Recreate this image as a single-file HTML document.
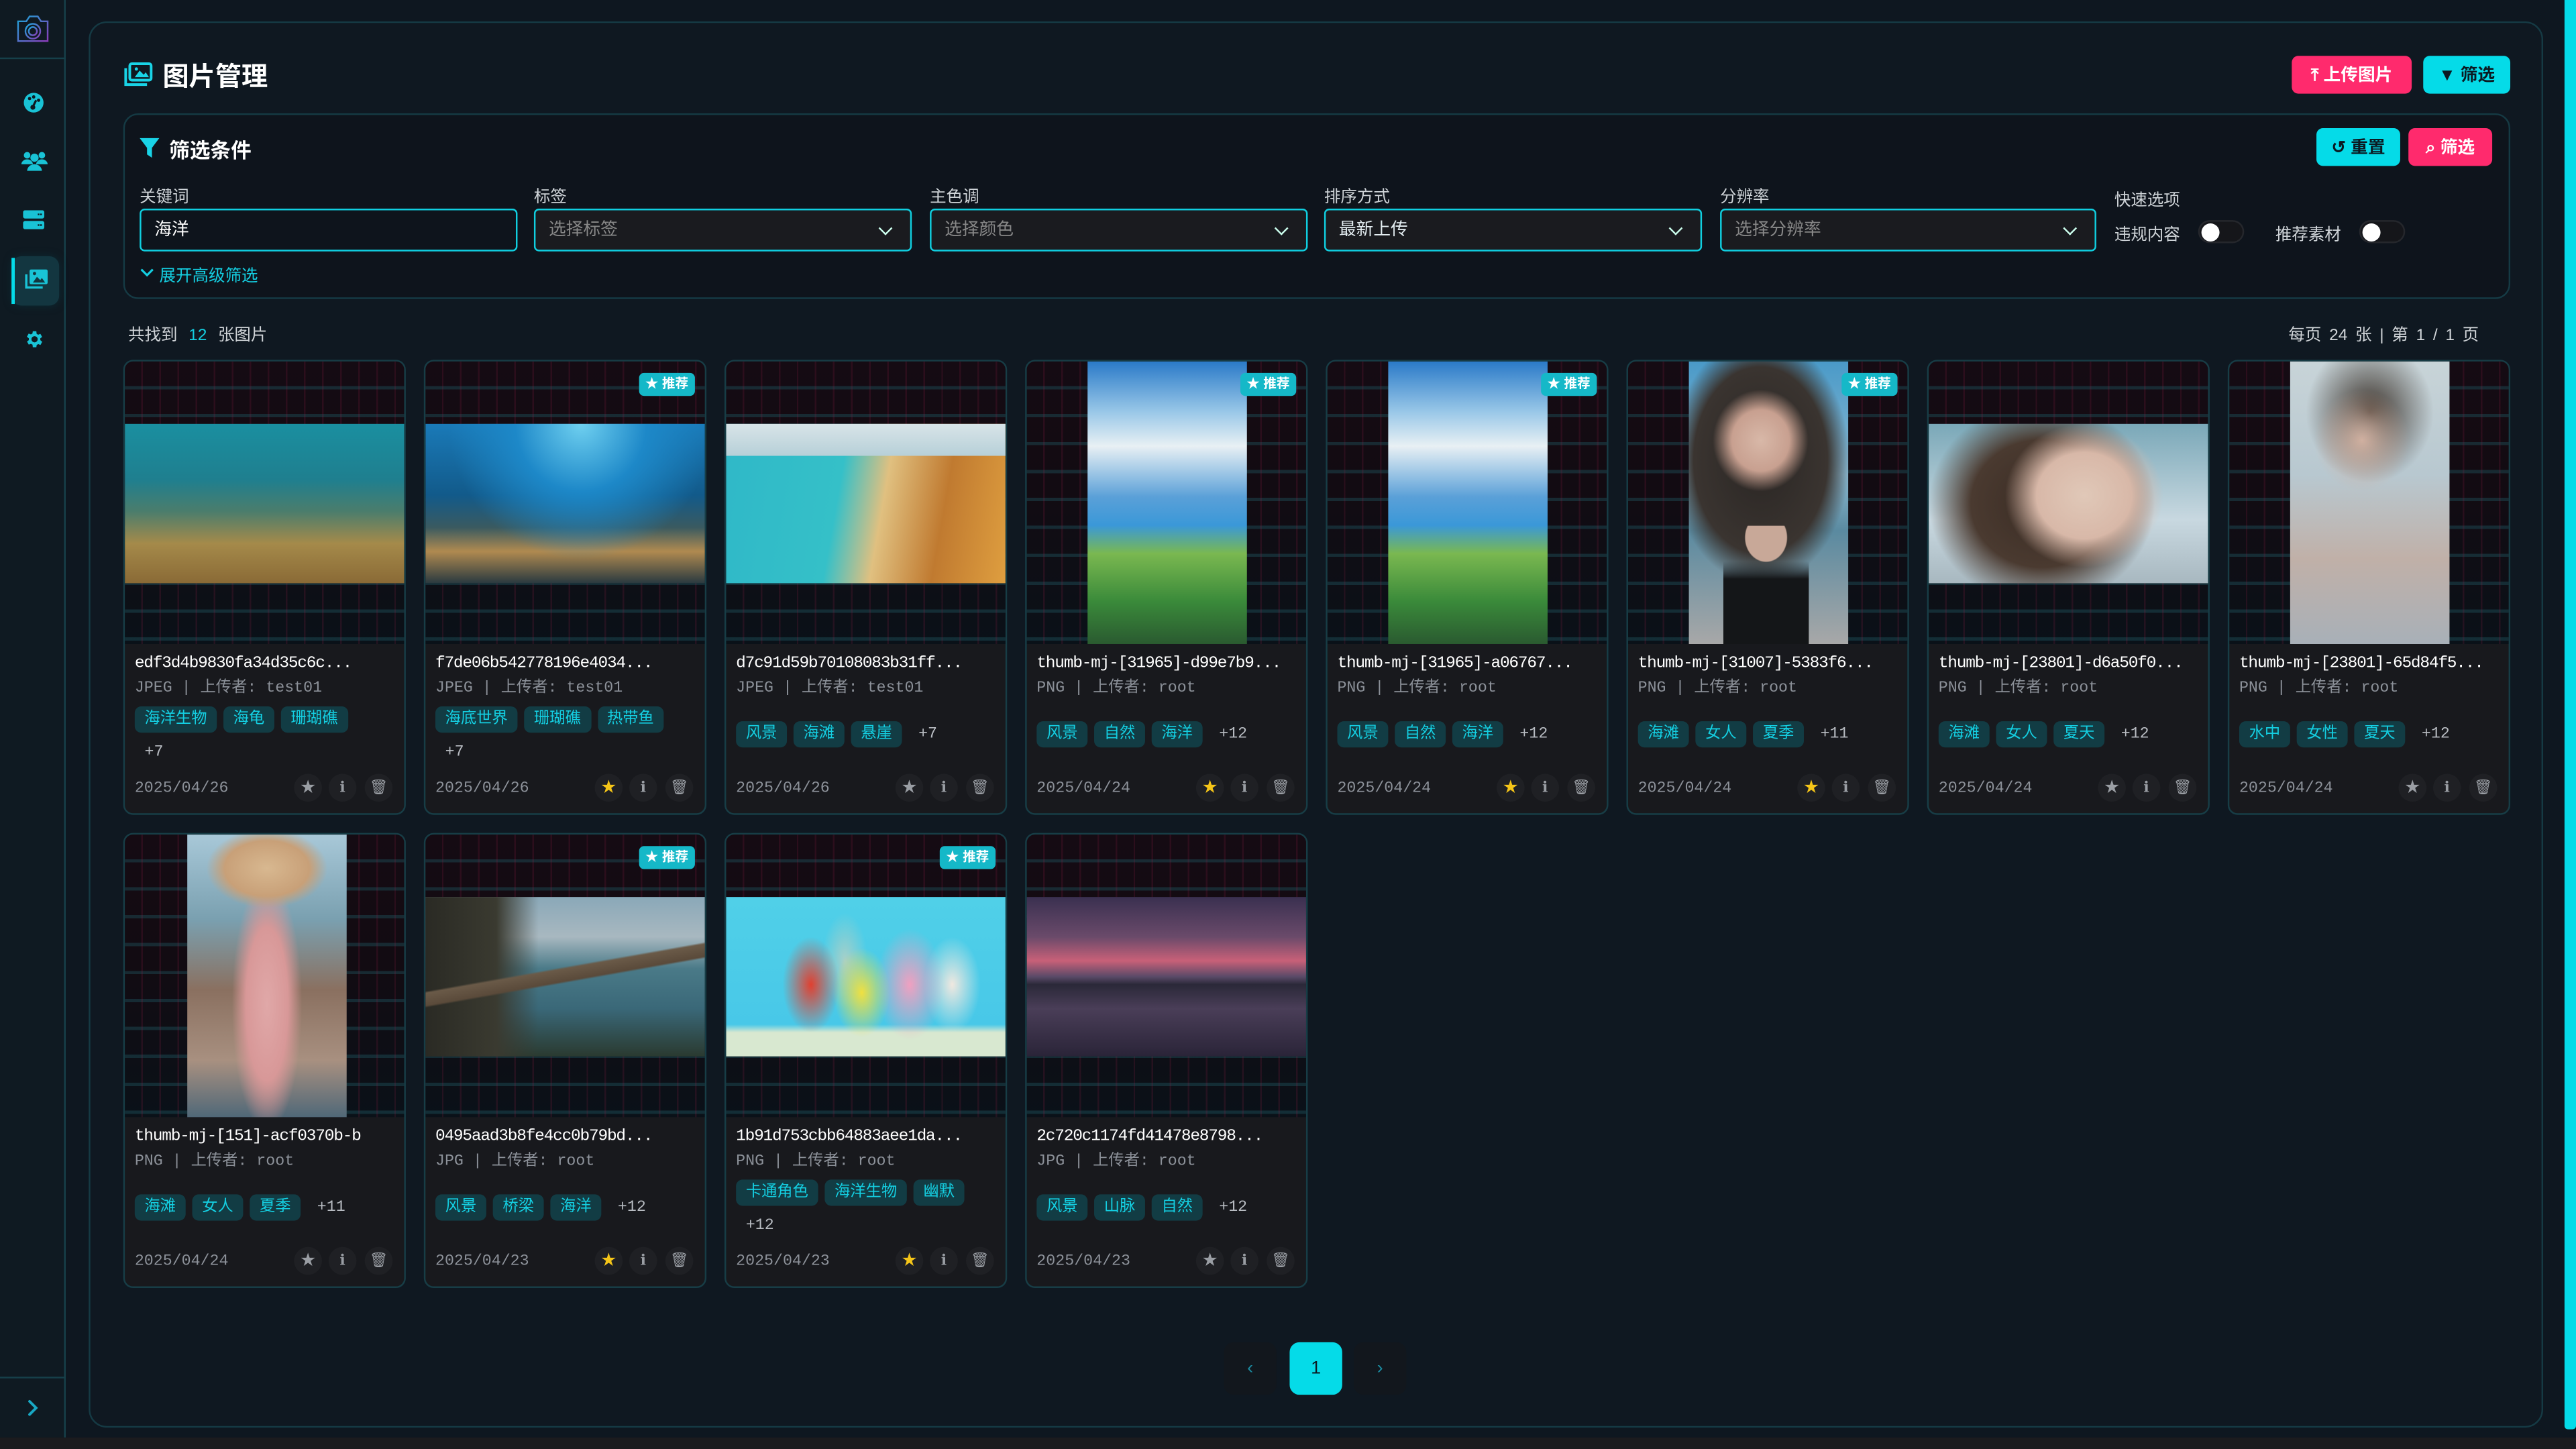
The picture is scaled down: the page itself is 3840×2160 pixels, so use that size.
<!DOCTYPE html>
<html><head><meta charset="utf-8">
<style>
*{margin:0;padding:0;box-sizing:border-box}
html,body{width:3840px;height:2160px;overflow:hidden;background:#1b1b1e}
#w{position:absolute;left:0;top:0;width:1568px;height:882px;transform:scale(2.44898);transform-origin:0 0;background:#0e1720;font-family:"Liberation Sans","Noto Sans CJK SC",sans-serif;color:#e8ecef;overflow:hidden}
.abs{position:absolute}
#side{left:0;top:0;width:40px;height:875px;background:#0f1a22;border-right:1px solid #16404a}
#bot{left:0;top:875px;width:1568px;height:7px;background:#1b1b1e}
#scroll{left:1561px;top:0;width:7px;height:870px;background:#05dbe8;border-radius:0 0 2px 2px}
#panel{left:54px;top:13px;width:1494px;height:856px;border:1px solid #153a44;border-radius:11px;background:#0f1821}
.btn{position:absolute;height:23px;border-radius:4px;font-size:10.5px;font-weight:bold;color:#111;display:flex;align-items:center;justify-content:center;gap:4px}
.pink{background:#ff2a6d;color:#fff}
.cyan{background:#05dbe8;color:#0b1a22}
#filter{left:75px;top:69px;width:1453px;height:113px;border:1px solid #153a44;border-radius:9px;background:#0e141c}
.lbl{position:absolute;font-size:10px;color:#cfd4d8}
.inp{position:absolute;top:127px;height:26px;width:230px;border:1px solid #10cfe0;border-radius:3px;background:#1a1b1f;font-size:10.5px;color:#888;padding-left:8px;line-height:24px}
.inp .chev{position:absolute;right:12px;top:8px;width:6px;height:6px;border-right:1.3px solid #cfe;border-bottom:1.3px solid #cfe;transform:rotate(45deg)}
.tog{position:absolute;top:134px;width:28px;height:14px;border-radius:7px;background:#15161a;border:1px solid #25272c}
.tog:after{content:"";position:absolute;left:1px;top:1px;width:11px;height:11px;border-radius:50%;background:#fff}
.card{position:absolute;width:172px;height:277px;border:1px solid #173d46;border-radius:6px;background:#18191d;overflow:hidden}
.ia{position:absolute;left:0;top:0;width:172px;height:172px;
background:
repeating-linear-gradient(90deg,transparent 0 10px,rgba(150,30,70,.18) 10px 11px),
repeating-linear-gradient(180deg,transparent 0 15px,rgba(30,80,90,.45) 15px 17px),
linear-gradient(#150b13 0,#120b12 45%,#0a1118 100%)}
.im{position:absolute}
.land{left:0;top:38px;width:172px;height:97px}
.por{left:37px;top:0;width:97px;height:172px}
.badge{position:absolute;right:6px;top:7px;height:14px;padding:0 4px;background:#15b8c8;border-radius:3px;font-size:8px;font-weight:bold;color:#fff;line-height:14px}
.ti{position:absolute;left:6px;top:179px;font-family:"Liberation Mono",monospace;font-size:10px;color:#fff;white-space:nowrap;letter-spacing:-.5px}
.me{position:absolute;left:6px;top:190px;font-family:"Liberation Mono","Noto Sans CJK SC",monospace;font-size:9.5px;color:#8c9199;white-space:nowrap}
.tg{position:absolute;left:6px;top:205px;width:150px;height:44px;display:flex;flex-wrap:wrap;align-content:center;row-gap:4px}
.tg span{font-size:9.5px;background:#123c44;color:#14cfe2;border-radius:4px;padding:2px 6px;margin-right:4px;height:16px;line-height:12px}
.tg i{font-style:normal;font-size:9.5px;color:#b8bcc2;padding:2px 6px;font-family:"Liberation Mono",monospace}
.dt{position:absolute;left:6px;top:254px;font-family:"Liberation Mono",monospace;font-size:9.5px;color:#8c9199}
.ic{position:absolute;top:251px;width:17px;height:17px;border-radius:50%;background:#1f2024;font-size:9px;text-align:center;line-height:17px;color:#9a9ea4}
.pg{position:absolute;top:817px;width:32px;height:32px;border-radius:6px;text-align:center;line-height:32px;font-size:11px}
</style></head><body>
<div id="w">
<div id="side" class="abs">
 <svg class="abs" style="left:9px;top:9px" width="22" height="17" viewBox="0 0 22 17"><defs><linearGradient id="cg" x1="0" y1="0" x2="1" y2="1"><stop offset="0" stop-color="#1aa6d8"/><stop offset="1" stop-color="#8a3bb8"/></linearGradient></defs><path d="M2 4h5l2-3h5l2 3h4v12H2z" fill="none" stroke="url(#cg)" stroke-width="1"/><circle cx="11" cy="10" r="4.5" fill="none" stroke="url(#cg)"/><circle cx="11" cy="10" r="2.5" fill="none" stroke="url(#cg)"/></svg>
 <div class="abs" style="left:0;top:35px;width:40px;height:1px;background:#16404a"></div>
 <svg class="abs" style="left:14px;top:56px" width="13" height="13" viewBox="0 0 13 13"><circle cx="6.5" cy="6.5" r="6" fill="#19c3d6"/><circle cx="4" cy="4" r="1" fill="#0f1a22"/><circle cx="6.5" cy="3" r="1" fill="#0f1a22"/><circle cx="9.5" cy="5" r="1" fill="#0f1a22"/><path d="M8 5L6 9" stroke="#0f1a22" stroke-width="1.3"/><circle cx="6" cy="9.3" r="1.5" fill="#0f1a22"/></svg>
 <svg class="abs" style="left:13px;top:92px" width="16" height="12" viewBox="0 0 16 12"><circle cx="3.5" cy="2.5" r="2" fill="#19c3d6"/><circle cx="12.5" cy="2.5" r="2" fill="#19c3d6"/><circle cx="8" cy="4" r="2.5" fill="#19c3d6"/><path d="M0 8a3.5 3 0 0 1 7 0zM9 8a3.5 3 0 0 1 7 0zM3.5 12a4.5 4 0 0 1 9 0z" fill="#19c3d6"/></svg>
 <svg class="abs" style="left:14px;top:128px" width="13" height="12" viewBox="0 0 13 12"><rect x="0" y="0" width="13" height="5" rx="1.3" fill="#19c3d6"/><rect x="0" y="6.5" width="13" height="5" rx="1.3" fill="#19c3d6"/><rect x="9" y="2" width="1" height="1" fill="#0f1a22"/><rect x="10.5" y="2" width="1" height="1" fill="#0f1a22"/><rect x="9" y="8.5" width="1" height="1" fill="#0f1a22"/><rect x="10.5" y="8.5" width="1" height="1" fill="#0f1a22"/></svg>
 <div class="abs" style="left:7px;top:156px;width:29px;height:30px;border-radius:6px;background:#133640;box-shadow:0 0 5px #0c2a33"></div>
 <div class="abs" style="left:7px;top:157px;width:2px;height:28px;background:#05dbe8"></div>
 <svg class="abs" style="left:15px;top:164px" width="14" height="13" viewBox="0 0 14 13"><rect x="3" y="0" width="11" height="9" rx="1" fill="#19c3d6"/><path d="M5 8l2.5-3.5 2 2 1-1.3 2 2.8z" fill="#133640"/><circle cx="6" cy="2.5" r="1" fill="#133640"/><path d="M1 3v8h10" fill="none" stroke="#19c3d6" stroke-width="1.4"/></svg>
 <svg class="abs" style="left:14px;top:200px" width="13" height="13" viewBox="0 0 24 24"><path fill="#19c3d6" d="M19.4 13a7.5 7.5 0 0 0 0-2l2.1-1.6-2-3.5-2.5 1a7 7 0 0 0-1.7-1L15 3h-4l-.4 2.6a7 7 0 0 0-1.7 1l-2.5-1-2 3.5L6.6 11a7.5 7.5 0 0 0 0 2l-2.1 1.6 2 3.5 2.5-1a7 7 0 0 0 1.7 1L11 21h4l.4-2.6a7 7 0 0 0 1.7-1l2.5 1 2-3.5zM13 15.5a3.5 3.5 0 1 1 0-7 3.5 3.5 0 0 1 0 7z"/></svg>
 <div class="abs" style="left:0;top:838px;width:40px;height:1px;background:#16404a"></div>
 <svg class="abs" style="left:16px;top:852px" width="8" height="10" viewBox="0 0 8 10"><path d="M2 1l4 4-4 4" fill="none" stroke="#18a8c4" stroke-width="1.6" stroke-linecap="round"/></svg>
</div>
<div id="bot" class="abs"></div>
<div id="scroll" class="abs"></div>
<div id="panel" class="abs"></div>

<svg class="abs" style="left:75px;top:38px" width="18" height="15" viewBox="0 0 18 15"><rect x="4" y="0.8" width="13" height="10" rx="1.2" fill="none" stroke="#19d3e6" stroke-width="1.6"/><path d="M7 9l3-4 2.5 2.5 1.2-1.5 2 3z" fill="#19d3e6"/><circle cx="8" cy="4" r="1" fill="#19d3e6"/><path d="M1.5 3.5v10h13" fill="none" stroke="#19d3e6" stroke-width="1.6"/></svg>
<div class="abs" style="left:99px;top:33px;font-size:16px;font-weight:bold;color:#fff">图片管理</div>
<div class="btn pink" style="left:1395px;top:34px;width:73px">⤒ 上传图片</div>
<div class="btn cyan" style="left:1475px;top:34px;width:53px">▼ 筛选</div>

<div id="filter" class="abs"></div>
<svg class="abs" style="left:85px;top:84px" width="12" height="12" viewBox="0 0 12 12"><path d="M0 0h12L7.5 6v6L4.5 10V6z" fill="#19d3e6"/></svg>
<div class="abs" style="left:103px;top:81px;font-size:12.5px;font-weight:bold;color:#fff">筛选条件</div>
<div class="btn cyan" style="left:1410px;top:78px;width:51px">↺ 重置</div>
<div class="btn pink" style="left:1466px;top:78px;width:51px">⌕ 筛选</div>

<div class="lbl" style="left:85px;top:111px">关键词</div>
<div class="lbl" style="left:325px;top:111px">标签</div>
<div class="lbl" style="left:566px;top:111px">主色调</div>
<div class="lbl" style="left:806px;top:111px">排序方式</div>
<div class="lbl" style="left:1047px;top:111px">分辨率</div>
<div class="lbl" style="left:1287px;top:113px">快速选项</div>
<div class="inp" style="left:85px;background:#0e141c;color:#fff">海洋</div>
<div class="inp" style="left:325px">选择标签<div class="chev"></div></div>
<div class="inp" style="left:566px">选择颜色<div class="chev"></div></div>
<div class="inp" style="left:806px;color:#e4eef2">最新上传<div class="chev"></div></div>
<div class="inp" style="left:1047px;width:229px">选择分辨率<div class="chev"></div></div>
<div class="lbl" style="left:1287px;top:134px">违规内容</div>
<div class="tog" style="left:1338px"></div>
<div class="lbl" style="left:1385px;top:134px">推荐素材</div>
<div class="tog" style="left:1436px"></div>
<svg class="abs" style="left:85px;top:163px" width="9" height="6" viewBox="0 0 9 6"><path d="M1 1l3.5 3.5L8 1" fill="none" stroke="#14cfe2" stroke-width="1.3"/></svg>
<div class="abs" style="left:97px;top:159px;font-size:10px;color:#14cfe2">展开高级筛选</div>

<div class="abs" style="left:78px;top:195px;font-size:10px;color:#d0d4d8">共找到 <span style="color:#14cfe2;margin:0 4px">12</span> 张图片</div>
<div class="abs" style="left:1393px;top:195px;font-size:10px;color:#d0d4d8;word-spacing:2px">每页 24 张 | 第 1 / 1 页</div>

<!-- row 1 -->
<div class="card" style="left:75px;top:219px"><div class="ia"></div>
 <div class="im land" style="background:linear-gradient(180deg,#1a8fa0 0%,#1f7f8f 35%,#4b7d6c 55%,#a58a4a 75%,#8a6a36 100%)"></div>
 <div class="ti">edf3d4b9830fa34d35c6c...</div><div class="me">JPEG | 上传者: test01</div>
 <div class="tg"><span>海洋生物</span><span>海龟</span><span>珊瑚礁</span><i>+7</i></div>
 <div class="dt">2025/04/26</div><div class="ic" style="left:103px">★</div><div class="ic" style="left:124px">ℹ</div><div class="ic" style="left:146px">🗑</div></div>

<div class="card" style="left:258px;top:219px"><div class="ia"></div>
 <div class="im land" style="background:radial-gradient(ellipse at 55% 0%,#6fd0f0 0,#1d88c8 30%,transparent 60%),linear-gradient(180deg,#1a7ab8 0%,#125a8a 45%,#3a5a60 65%,#b08a50 80%,#2a3a40 100%)"></div>
 <div class="badge">★ 推荐</div>
 <div class="ti">f7de06b542778196e4034...</div><div class="me">JPEG | 上传者: test01</div>
 <div class="tg"><span>海底世界</span><span>珊瑚礁</span><span>热带鱼</span><i>+7</i></div>
 <div class="dt">2025/04/26</div><div class="ic" style="left:103px;color:#f5c518">★</div><div class="ic" style="left:124px">ℹ</div><div class="ic" style="left:146px">🗑</div></div>

<div class="card" style="left:441px;top:219px"><div class="ia"></div>
 <div class="im land" style="background:linear-gradient(180deg,#d8e4e8 0%,#b7d0d8 20%,transparent 20%),linear-gradient(100deg,#2fb8c8 0%,#35c0c8 40%,#e0c080 55%,#c07a30 75%,#e0a040 100%)"></div>
 <div class="ti">d7c91d59b70108083b31ff...</div><div class="me">JPEG | 上传者: test01</div>
 <div class="tg"><span>风景</span><span>海滩</span><span>悬崖</span><i>+7</i></div>
 <div class="dt">2025/04/26</div><div class="ic" style="left:103px">★</div><div class="ic" style="left:124px">ℹ</div><div class="ic" style="left:146px">🗑</div></div>

<div class="card" style="left:624px;top:219px"><div class="ia"></div>
 <div class="im por" style="background:linear-gradient(180deg,#2a7ac8 0%,#9ac8e8 18%,#e8f0f4 30%,#5aa0d8 48%,#3a98d8 58%,#7ab850 68%,#3a8a3a 85%,#2a5a30 100%)"></div>
 <div class="badge">★ 推荐</div>
 <div class="ti">thumb-mj-[31965]-d99e7b9...</div><div class="me">PNG | 上传者: root</div>
 <div class="tg"><span>风景</span><span>自然</span><span>海洋</span><i>+12</i></div>
 <div class="dt">2025/04/24</div><div class="ic" style="left:103px;color:#f5c518">★</div><div class="ic" style="left:124px">ℹ</div><div class="ic" style="left:146px">🗑</div></div>

<div class="card" style="left:807px;top:219px"><div class="ia"></div>
 <div class="im por" style="background:linear-gradient(180deg,#2a7ac8 0%,#9ac8e8 18%,#e8f0f4 30%,#5aa0d8 48%,#3a98d8 58%,#7ab850 68%,#3a8a3a 85%,#2a5a30 100%)"></div>
 <div class="badge">★ 推荐</div>
 <div class="ti">thumb-mj-[31965]-a06767...</div><div class="me">PNG | 上传者: root</div>
 <div class="tg"><span>风景</span><span>自然</span><span>海洋</span><i>+12</i></div>
 <div class="dt">2025/04/24</div><div class="ic" style="left:103px;color:#f5c518">★</div><div class="ic" style="left:124px">ℹ</div><div class="ic" style="left:146px">🗑</div></div>

<div class="card" style="left:990px;top:219px"><div class="ia"></div>
 <div class="im por" style="background:radial-gradient(ellipse 30% 18% at 45% 28%,#d8b8a8 0,#c8a090 60%,transparent 100%),radial-gradient(ellipse 70% 55% at 45% 35%,#2a2624 0,#3a3430 60%,transparent 80%),linear-gradient(180deg,#4a9ac8 0%,#8ab8d0 40%,#5a8aa0 60%,#a8a8a8 100%)"></div>
 <div class="im" style="left:58px;top:100px;width:52px;height:72px;background:radial-gradient(ellipse 60% 50% at 50% 10%,#c8a898 0,#c8a898 40%,transparent 42%),linear-gradient(180deg,transparent 30%,#141618 45%)"></div>
 <div class="badge">★ 推荐</div>
 <div class="ti">thumb-mj-[31007]-5383f6...</div><div class="me">PNG | 上传者: root</div>
 <div class="tg"><span>海滩</span><span>女人</span><span>夏季</span><i>+11</i></div>
 <div class="dt">2025/04/24</div><div class="ic" style="left:103px;color:#f5c518">★</div><div class="ic" style="left:124px">ℹ</div><div class="ic" style="left:146px">🗑</div></div>

<div class="card" style="left:1173px;top:219px"><div class="ia"></div>
 <div class="im land" style="background:radial-gradient(ellipse 28% 45% at 55% 45%,#e0c8b8 0,#d8b8a8 60%,transparent 100%),radial-gradient(ellipse 50% 80% at 40% 50%,#3a2c24 0,#4a3a30 50%,transparent 80%),linear-gradient(180deg,#7aa8b8 0%,#c8d8e0 60%,#a8b8c0 100%)"></div>
 <div class="ti">thumb-mj-[23801]-d6a50f0...</div><div class="me">PNG | 上传者: root</div>
 <div class="tg"><span>海滩</span><span>女人</span><span>夏天</span><i>+12</i></div>
 <div class="dt">2025/04/24</div><div class="ic" style="left:103px">★</div><div class="ic" style="left:124px">ℹ</div><div class="ic" style="left:146px">🗑</div></div>

<div class="card" style="left:1356px;top:219px"><div class="ia"></div>
 <div class="im por" style="background:radial-gradient(ellipse 30% 18% at 45% 28%,#d0b0a0 0,transparent 100%),radial-gradient(ellipse 40% 25% at 50% 18%,#3a3028 0,transparent 100%),linear-gradient(180deg,#c8d4d8 0%,#b8c8d0 40%,#c0b0a8 70%,#a8b0b8 100%)"></div>
 <div class="ti">thumb-mj-[23801]-65d84f5...</div><div class="me">PNG | 上传者: root</div>
 <div class="tg"><span>水中</span><span>女性</span><span>夏天</span><i>+12</i></div>
 <div class="dt">2025/04/24</div><div class="ic" style="left:103px">★</div><div class="ic" style="left:124px">ℹ</div><div class="ic" style="left:146px">🗑</div></div>

<!-- row 2 -->
<div class="card" style="left:75px;top:507px"><div class="ia"></div>
 <div class="im por" style="left:38px;background:radial-gradient(ellipse 38% 14% at 50% 12%,#d8b890 0,#c8a078 70%,transparent 100%),radial-gradient(ellipse 22% 45% at 50% 60%,#e0a8a8 0,#d89898 60%,transparent 100%),linear-gradient(180deg,#a8c8d8 0%,#7aa0b0 30%,#8a7060 55%,#a89080 80%,#506878 100%)"></div>
 <div class="ti">thumb-mj-[151]-acf0370b-b</div><div class="me">PNG | 上传者: root</div>
 <div class="tg"><span>海滩</span><span>女人</span><span>夏季</span><i>+11</i></div>
 <div class="dt">2025/04/24</div><div class="ic" style="left:103px">★</div><div class="ic" style="left:124px">ℹ</div><div class="ic" style="left:146px">🗑</div></div>

<div class="card" style="left:258px;top:507px"><div class="ia"></div>
 <div class="im land" style="background:linear-gradient(170deg,transparent 45%,#6a5a48 46%,#5a4a3a 52%,transparent 53%),linear-gradient(90deg,#2a2a24 0%,#3a3a30 25%,transparent 40%),linear-gradient(180deg,#8aa8b8 0%,#a8b8c0 25%,#4a7a88 45%,#3a6878 70%,#2a3a30 100%)"></div>
 <div class="badge">★ 推荐</div>
 <div class="ti">0495aad3b8fe4cc0b79bd...</div><div class="me">JPG | 上传者: root</div>
 <div class="tg"><span>风景</span><span>桥梁</span><span>海洋</span><i>+12</i></div>
 <div class="dt">2025/04/23</div><div class="ic" style="left:103px;color:#f5c518">★</div><div class="ic" style="left:124px">ℹ</div><div class="ic" style="left:146px">🗑</div></div>

<div class="card" style="left:441px;top:507px"><div class="ia"></div>
 <div class="im land" style="background:radial-gradient(ellipse 10% 30% at 30% 55%,#e04030 0,transparent 100%),radial-gradient(ellipse 10% 28% at 48% 60%,#f0e040 0,transparent 100%),radial-gradient(ellipse 12% 35% at 65% 55%,#f0a0c0 0,transparent 100%),radial-gradient(ellipse 10% 30% at 80% 55%,#f0e8e0 0,transparent 100%),radial-gradient(ellipse 8% 30% at 42% 40%,#a8d0c8 0,transparent 100%),linear-gradient(180deg,#50d0e8 0%,#48c8e8 80%,#d8e8d0 85%)"></div>
 <div class="badge">★ 推荐</div>
 <div class="ti">1b91d753cbb64883aee1da...</div><div class="me">PNG | 上传者: root</div>
 <div class="tg"><span>卡通角色</span><span>海洋生物</span><span>幽默</span><i>+12</i></div>
 <div class="dt">2025/04/23</div><div class="ic" style="left:103px;color:#f5c518">★</div><div class="ic" style="left:124px">ℹ</div><div class="ic" style="left:146px">🗑</div></div>

<div class="card" style="left:624px;top:507px"><div class="ia"></div>
 <div class="im land" style="background:linear-gradient(180deg,#3a3050 0%,#6a4a6a 25%,#c86078 40%,#5a4a68 50%,#2a2838 55%,#4a3e58 70%,#2a2438 100%)"></div>
 <div class="ti">2c720c1174fd41478e8798...</div><div class="me">JPG | 上传者: root</div>
 <div class="tg"><span>风景</span><span>山脉</span><span>自然</span><i>+12</i></div>
 <div class="dt">2025/04/23</div><div class="ic" style="left:103px">★</div><div class="ic" style="left:124px">ℹ</div><div class="ic" style="left:146px">🗑</div></div>

<div class="pg" style="left:745px;background:#12171d;color:#1a8aa0">‹</div>
<div class="pg" style="left:785px;background:#05dbe8;color:#0b1a22">1</div>
<div class="pg" style="left:824px;background:#12171d;color:#1a8aa0">›</div>
</div>
</body></html>
